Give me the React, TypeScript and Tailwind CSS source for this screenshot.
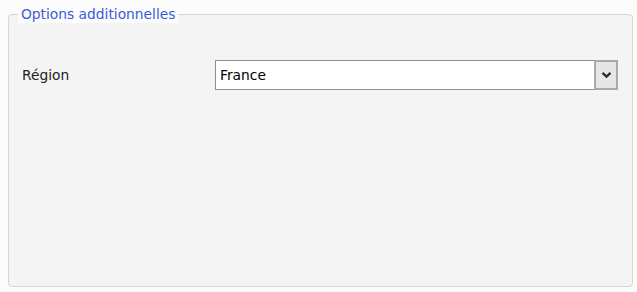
import React from "react";

const f = { fontFamily: "'DejaVu Sans', Verdana, sans-serif", fontSize: 13.8 };

export default function App() {
  return (
    <div className="w-[637px] h-[292px] bg-[#fcfcfc] relative">
      <div className="absolute left-[8px] top-[14px] w-[625px] h-[273px] border border-[#d5d5d5] rounded-[4px] bg-[#f4f4f4]">
        <div className="absolute left-[9px] -top-[10px] px-[3px] bg-[#fcfcfc] leading-[18px] text-[#3c5ad8]" style={f}>
          Options additionnelles
        </div>
        <div className="flex items-center mt-[45px]">
          <div className="w-[206px] pl-[13px] text-[#222]" style={f}>Région</div>
          <div className="w-[403px] h-[30px] border border-[#8e8f8f] bg-white flex items-stretch">
            <div className="flex-1 pl-[4px] text-black flex items-center" style={f}>France</div>
            <div className="w-[24px] -my-[1px] -mr-[1px] border-2 border-[#a9a9a9] bg-[#e6e6e6] flex items-center justify-center">
              <svg width="11" height="8" viewBox="0 0 11 8">
                <path d="M1.5 1.8 L5.5 5.6 L9.5 1.8" stroke="#2e2e2e" strokeWidth="2.4" fill="none" />
              </svg>
            </div>
          </div>
        </div>
      </div>
    </div>
  );
}
